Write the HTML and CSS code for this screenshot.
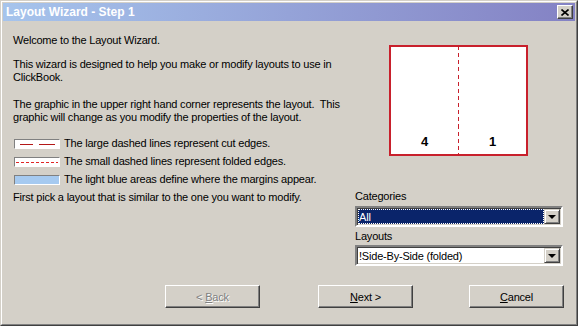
FILE: index.html
```html
<!DOCTYPE html>
<html lang="en">
<head>
    <meta charset="UTF-8">
    <title>Layout Wizard - Step 1</title>
    <link rel="stylesheet" href="styles.css">
</head>
<body>
    <div class="window">
        <div class="frame">
            <div class="titlebar">
                <span class="title">Layout Wizard - Step 1</span>
                <span class="close">
                    <svg width="8" height="7" viewBox="0 0 8 7">
                        <path d="M0.5 0.5 L7.5 6.5 M7.5 0.5 L0.5 6.5" stroke="#000" stroke-width="1.6" fill="none"/>
                    </svg>
                </span>
            </div>

            <div class="content">
                <div class="intro">
                    <p class="p1">Welcome to the Layout Wizard.</p>
                    <p class="p2">This wizard is designed to help you make or modify layouts to use in ClickBook.</p>
                    <p class="p3">The graphic in the upper right hand corner represents the layout.&nbsp; This graphic will change as you modify the properties of the layout.</p>

                    <div class="legend">
                        <div class="legend-row">
                            <span class="swatch">
                                <svg width="44" height="8" viewBox="0 0 44 8" shape-rendering="crispEdges">
                                    <path d="M5 4.5 H18 M24 4.5 H40" stroke="#b41818" stroke-width="1"/>
                                </svg>
                            </span>
                            <span>The large dashed lines represent cut edges.</span>
                        </div>
                        <div class="legend-row">
                            <span class="swatch">
                                <svg width="44" height="8" viewBox="0 0 44 8" shape-rendering="crispEdges">
                                    <path d="M1 4.5 H43" stroke="#e02424" stroke-width="1" stroke-dasharray="3 2"/>
                                </svg>
                            </span>
                            <span>The small dashed lines represent folded edges.</span>
                        </div>
                        <div class="legend-row">
                            <span class="swatch margin"></span>
                            <span>The light blue areas define where the margins appear.</span>
                        </div>
                    </div>
                    <p class="p4">First pick a layout that is similar to the one you want to modify.</p>
                </div>

                <div class="side">
                    <div class="preview">
                        <div class="page"><span>4</span></div>
                        <div class="page fold-left"><span>1</span></div>
                    </div>

                    <label class="field-label">Categories</label>
                    <div class="combo">
                        <div class="combo-text selected"><span>All</span></div>
                        <div class="combo-btn"><span class="arrow"></span></div>
                    </div>

                    <label class="field-label second">Layouts</label>
                    <div class="combo">
                        <div class="combo-text"><span>!Side-By-Side (folded)</span></div>
                        <div class="combo-btn"><span class="arrow"></span></div>
                    </div>
                </div>
            </div>

            <div class="buttons">
                <button class="disabled">&lt; <u>B</u>ack</button>
                <button><u>N</u>ext &gt;</button>
                <button><u>C</u>ancel</button>
            </div>
        </div>
    </div>
</body>
</html>
```

FILE: styles.css
```css
body {
    margin: 0;
    font-family: "Liberation Sans", Arial, sans-serif;
    font-size: 11px;
    letter-spacing: -0.2px;
    color: #000;
    background: #d4d0c8;
}

.window {
    width: 578px;
    height: 326px;
    box-sizing: border-box;
    border: 1px solid;
    border-color: #d4d0c8 #404040 #404040 #d4d0c8;
    background: #d4d0c8;
    display: flex;
}

.frame {
    flex: 1;
    border: 1px solid;
    border-color: #fff #808080 #808080 #fff;
    padding: 1px;
    display: flex;
    flex-direction: column;
}

.titlebar {
    height: 18px;
    display: flex;
    align-items: center;
    justify-content: space-between;
    padding: 0 2px 0 3px;
    background: linear-gradient(to right, #a6c4ec, #8482c4);
}

.title {
    color: #fff;
    font-weight: bold;
    font-size: 12px;
    letter-spacing: 0;
}

.close {
    width: 14px;
    height: 12px;
    border: 1px solid;
    border-color: #fff #404040 #404040 #fff;
    box-shadow: inset -1px -1px 0 #808080;
    background: #d4d0c8;
    display: flex;
    align-items: center;
    justify-content: center;
}

.content {
    flex: 1;
    display: flex;
    justify-content: space-between;
    padding: 0 12px 0 10px;
}

/* left column */
.intro {
    width: 340px;
    padding-top: 13px;
    line-height: 13px;
}

.intro p {
    margin: 0;
}

.p2 {
    margin-top: 11px !important;
}

.p3 {
    margin-top: 14px !important;
}

.legend {
    margin-top: 13px;
    display: flex;
    flex-direction: column;
    gap: 5px;
}

.legend-row {
    display: flex;
    align-items: center;
    gap: 4px;
    height: 13px;
}

.swatch {
    width: 44px;
    height: 8px;
    margin-left: 1px;
    border: 1px solid;
    border-color: #808080 #fff #fff #808080;
    background: #fff;
    display: flex;
}

.swatch.margin {
    background: #a6caf0;
}

.p4 {
    margin-top: 5px !important;
}

/* right column */
.side {
    width: 208px;
    display: flex;
    flex-direction: column;
}

.preview {
    margin: 24px 0 0 34px;
    width: 135px;
    height: 107px;
    border: 2px solid #c8202c;
    background: #fff;
    display: flex;
}

.page {
    flex: 1;
    display: flex;
    align-items: flex-end;
    justify-content: center;
    padding-bottom: 5px;
    font-weight: bold;
    font-size: 13px;
    letter-spacing: 0;
}

.page.fold-left {
    border-left: 1px dashed #c8202c;
    border-image: repeating-linear-gradient(to bottom, #c8202c 0 4px, transparent 4px 7px) 1;
}

.field-label {
    display: block;
    line-height: 13px;
    margin-top: 34px;
}

.field-label.second {
    margin-top: 3px;
}

.combo {
    margin-top: 3px;
    height: 15px;
    border: 2px solid;
    border-color: #808080 #fff #fff #808080;
    box-shadow: inset 1px 1px 0 #404040, inset -1px -1px 0 #d4d0c8;
    background: #fff;
    display: flex;
    padding: 1px;
}

.field-label.second + .combo {
    margin-top: 2px;
}

.combo-text {
    flex: 1;
    display: flex;
    align-items: center;
    padding-left: 1px;
}

.combo-text.selected {
    background: #0a246a;
    color: #fff;
    outline: 1px dotted #fff;
    outline-offset: -1px;
}

.combo-btn {
    width: 14px;
    border: 1px solid;
    border-color: #d4d0c8 #404040 #404040 #d4d0c8;
    box-shadow: inset 1px 1px 0 #fff, inset -1px -1px 0 #808080;
    background: #d4d0c8;
    display: flex;
    align-items: center;
    justify-content: center;
}

.arrow {
    width: 0;
    height: 0;
    border-left: 4px solid transparent;
    border-right: 4px solid transparent;
    border-top: 4px solid #000;
}

/* buttons */
.buttons {
    display: flex;
    justify-content: flex-end;
    gap: 56px;
    padding: 0 11px 15px 0;
}

.buttons button:nth-child(2) {
    margin-left: 2px;
}

button {
    width: 95px;
    height: 23px;
    font-family: inherit;
    font-size: 11px;
    letter-spacing: -0.2px;
    color: #000;
    background: #d4d0c8;
    border: 1px solid;
    border-color: #fff #404040 #404040 #fff;
    box-shadow: inset -1px -1px 0 #808080;
    padding: 0;
}

button.disabled {
    color: #808080;
    text-shadow: 1px 1px 0 #fff;
}
```
